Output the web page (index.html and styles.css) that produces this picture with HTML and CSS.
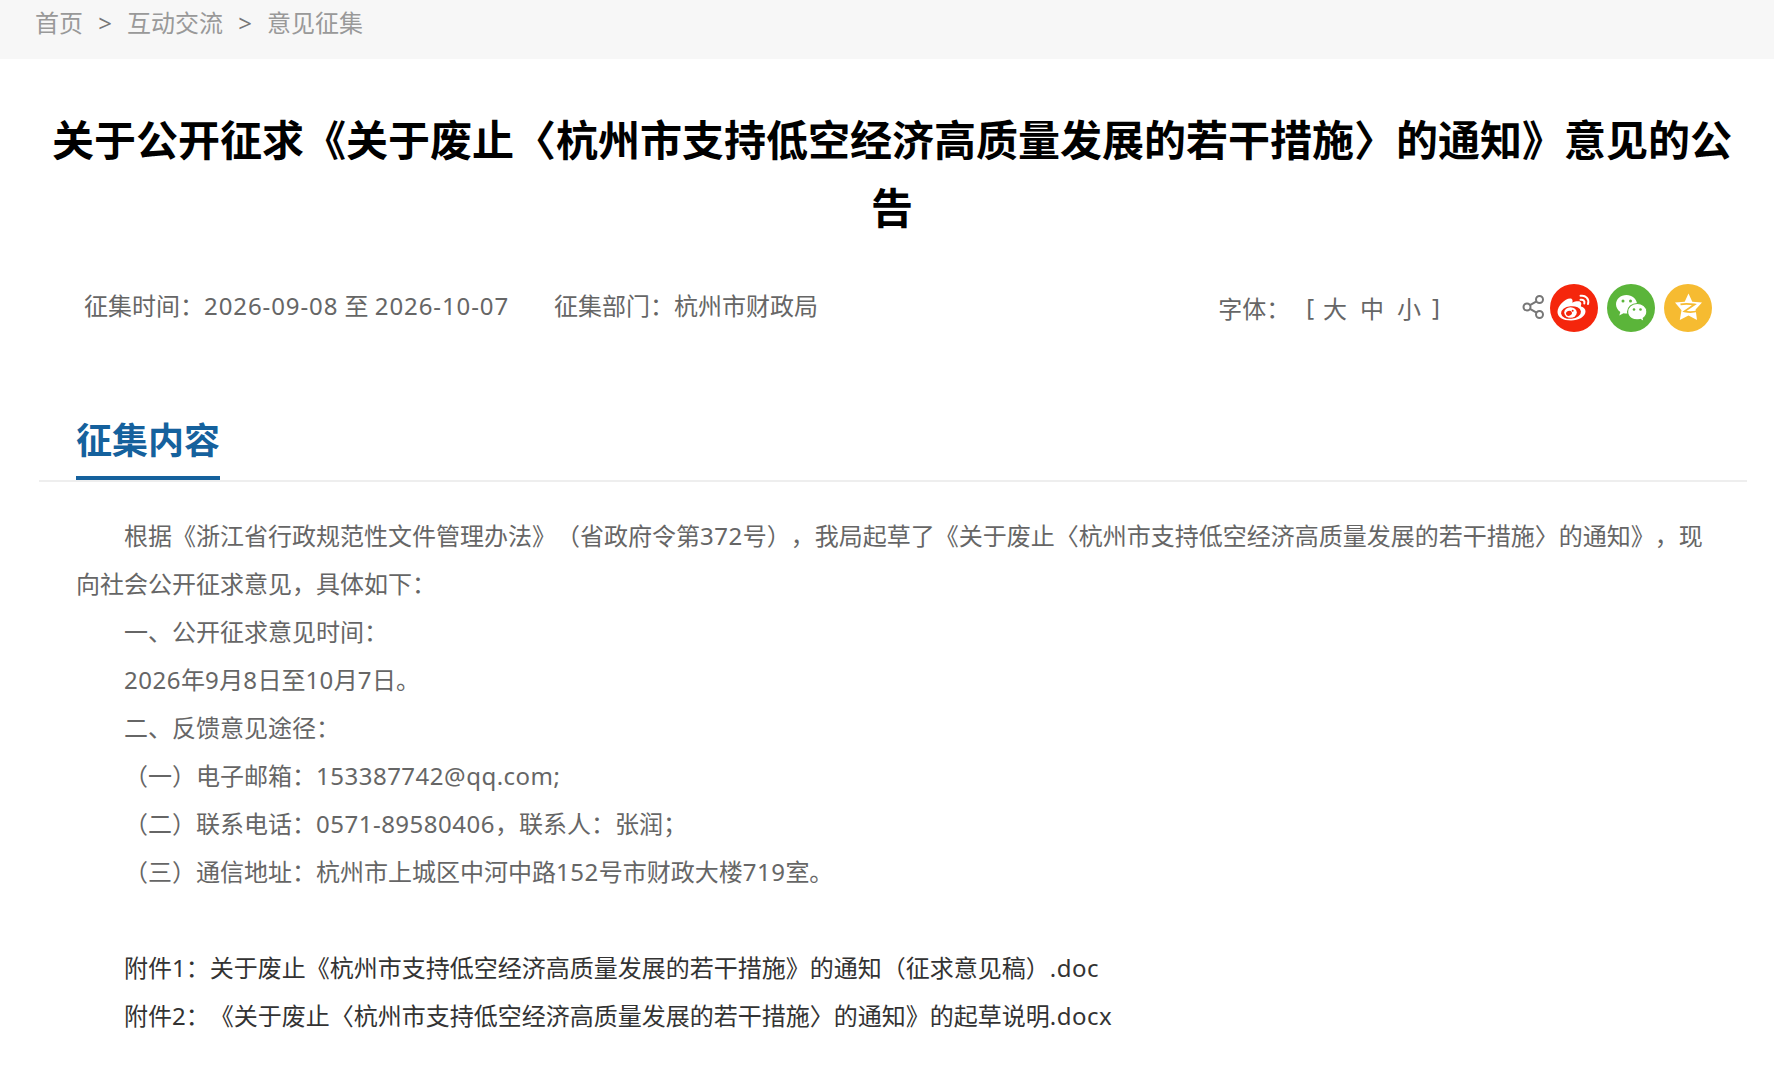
FILE: index.html
```
<!DOCTYPE html>
<html lang="zh-CN">
<head>
  <meta charset="UTF-8" />
  <title>意见征集</title>
  <link rel="stylesheet" href="styles.css">
</head>
<body>
  <div class="crumbs">
    <a>首页</a><span>&gt;</span><a>互动交流</a><span>&gt;</span><a>意见征集</a>
  </div>

  <h1>关于公开征求《关于废止〈杭州市支持低空经济高质量发展的若干措施〉的通知》意见的公告</h1>

  <div class="info">
    <div class="time">征集时间：<span class="date">2026-09-08</span> 至 <span class="date">2026-10-07</span></div>
    <div class="dept">征集部门：杭州市财政局</div>
    <div class="fontsize">
      <span class="label">字体：</span><span>[</span><a>大</a><a>中</a><a>小</a><span class="end">]</span>
    </div>
    <div class="share">
      <svg class="share-icon" viewBox="0 0 24 26" fill="none" stroke="#777" stroke-width="2">
        <circle cx="5" cy="13" r="3.5" />
        <circle cx="17.5" cy="5.5" r="3.5" />
        <circle cx="17.5" cy="20.5" r="3.5" />
        <path d="M8 11.2L14.5 7.3M8 14.8L14.5 18.7" />
      </svg>
      <!-- weibo -->
      <svg class="round" viewBox="0 0 48 48">
        <circle cx="24" cy="24" r="24" fill="#f5260c" />
        <path fill="#fff" d="M7.5 28C7.5 22 15 14.500 20 14.500C22.500 14.500 23 16.500 22.300 18.700C26 17 31 16.500 31.300 19.500C31.400 20.800 30.500 22 31 22.400C34 23.200 35.500 25 35.500 27.500C35.500 32.500 28.500 36.500 21 36.500C13 36.500 7.500 33 7.500 28Z" />
        <ellipse cx="21" cy="28.500" rx="10" ry="6.300" fill="#f5260c" transform="rotate(-6 21 28.500)" />
        <ellipse cx="20.500" cy="28.500" rx="6.300" ry="5.200" fill="#fff" />
        <ellipse cx="19" cy="29.300" rx="3" ry="2.400" fill="#f5260c" transform="rotate(-25 19 29.300)" />
        <circle cx="22.700" cy="26.700" r="1" fill="#f5260c" />
        <path fill="none" stroke="#fff" stroke-width="2" stroke-linecap="round" d="M30.500 11.800C35.500 10.800 39.500 15 38 20M30.500 15.800C33.200 15.200 35 17.200 34.300 19.500" />
      </svg>
      <!-- wechat -->
      <svg class="round" viewBox="0 0 48 48">
        <circle cx="24" cy="24" r="24" fill="#5bb53a" />
        <path fill="#fff" d="M19.500 11C13.500 11 9 15.200 9 20.300C9 23.500 10.700 26.200 13.300 27.900L12.300 31.500L16.500 29.200C18 29.600 19.500 29.700 21 29.500L30 19.500C29.500 14.700 25 11 19.500 11Z" />
        <circle cx="16" cy="17" r="1.500" fill="#5bb53a" />
        <circle cx="23.500" cy="17" r="1.500" fill="#5bb53a" />
        <path fill="#fff" stroke="#5bb53a" stroke-width="1.200" d="M30.300 19.500C35.700 19.500 39.900 23.100 39.900 27.700C39.900 30.500 38.500 32.700 36.300 34.200L37 37.800L33.300 35.500C26.500 37.200 20.600 33.500 20.600 27.700C20.600 23.100 24.900 19.500 30.300 19.500Z" />
        <circle cx="27" cy="25.500" r="1.300" fill="#5bb53a" />
        <circle cx="33.500" cy="25.500" r="1.300" fill="#5bb53a" />
      </svg>
      <!-- qzone -->
      <svg class="round" viewBox="0 0 48 48">
        <circle cx="24" cy="24" r="24" fill="#f6bb31" />
        <path fill="#fff" d="M24.500 9.500L28.300 17.800L38 18.500L31.600 25.500L33 36L24.500 31.600L15.800 36L17.500 26.300L11 18.500L20.700 17.800Z" />
        <path fill="none" stroke="#f6bb31" stroke-width="1.800" d="M16.500 20.300C21 19.500 26 19.800 30.500 20.500L20.500 27.300C25 28.500 29 28.300 34 27" />
      </svg>
    </div>
  </div>

  <div class="section-title"><h2>征集内容</h2></div>

  <div class="content">
    <p>根据《浙江省行政规范性文件管理办法》（省政府令第<span class="num">372</span>号），我局起草了《关于废止〈杭州市支持低空经济高质量发展的若干措施〉的通知》，现向社会公开征求意见，具体如下：</p>
    <p>一、公开征求意见时间：</p>
    <p><span class="num">2026</span>年<span class="num">9</span>月<span class="num">8</span>日至<span class="num">10</span>月<span class="num">7</span>日。</p>
    <p>二、反馈意见途径：</p>
    <p>（一）电子邮箱：<span class="num">153387742@qq.com;</span></p>
    <p>（二）联系电话：<span class="num">0571-89580406</span>，联系人：张润；</p>
    <p>（三）通信地址：杭州市上城区中河中路<span class="num">152</span>号市财政大楼<span class="num">719</span>室。</p>
    <div class="files">
      <p><a>附件1：关于废止《杭州市支持低空经济高质量发展的若干措施》的通知（征求意见稿）<span class="num">.doc</span></a></p>
      <p><a>附件2：《关于废止〈杭州市支持低空经济高质量发展的若干措施〉的通知》的起草说明<span class="num">.docx</span></a></p>
    </div>
  </div>
</body>
</html>
```

FILE: styles.css
```
* {
  box-sizing: border-box;
  margin: 0;
  padding: 0;
}

body {
  font-family: "Noto Sans", "Noto Sans CJK SC", sans-serif;
  font-size: 24px;
  color: #666;
  background: #fff;
  text-spacing-trim: space-all;
}

.crumbs {
  display: flex;
  height: 59px;
  padding-left: 35px;
  background: #f7f7f7;
  color: #999;
  line-height: 46px;
}

.crumbs span {
  width: 44px;
  text-align: center;
  color: #777;
}

h1 {
  padding: 47px 40px 0 50px;
  font-size: 42px;
  line-height: 68px;
  text-align: center;
  color: #000;
  word-break: break-all;
}

.info {
  display: flex;
  align-items: center;
  height: 54px;
  margin-top: 39px;
  padding: 0 62px 0 84px;
}

.time {
  width: 470px;
  padding-bottom: 8px;
  white-space: nowrap;
}

.date {
  letter-spacing: 0.9px;
}

.num {
  letter-spacing: 0.5px;
}

.dept {
  flex: 1;
  padding-bottom: 8px;
}

.fontsize {
  display: flex;
  margin-right: 82px;
  padding-bottom: 2px;
}

.fontsize .label {
  width: 88px;
}

.fontsize a {
  margin-left: 13px;
}

.fontsize span + a {
  margin-left: 9px;
}

.fontsize .end {
  margin-left: 11px;
}

.share {
  display: flex;
  align-items: center;
}

.share-icon {
  width: 24px;
  height: 26px;
  margin: 0 4px 3px 0;
}

.round {
  width: 48px;
  height: 48px;
  margin-right: 9px;
}

.round:last-child {
  margin-right: 0;
}

.section-title {
  display: flex;
  height: 81px;
  margin: 66px 27px 0 39px;
  padding-left: 37px;
  border-bottom: 2px solid #eee;
}

h2 {
  height: 79px;
  padding-top: 14px;
  border-bottom: 4px solid #15619d;
  font-size: 36px;
  line-height: 52px;
  color: #15619d;
}

.content {
  padding: 30px 66px 0 76px;
  line-height: 48px;
}

.content p {
  text-indent: 2em;
}

.files {
  margin-top: 48px;
  color: #333;
}
```
